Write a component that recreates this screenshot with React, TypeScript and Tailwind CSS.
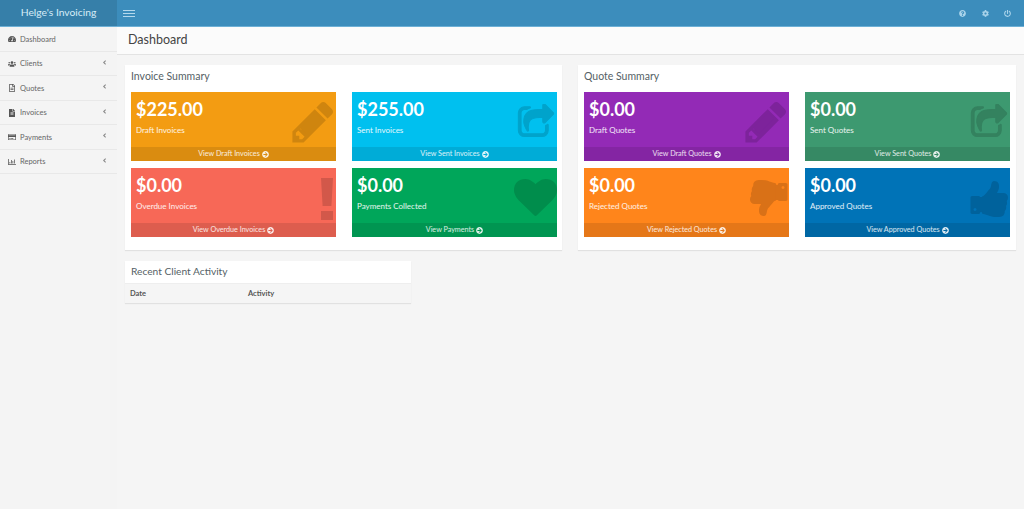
import React from 'react';
import {
  FaTachometerAlt, FaUsers, FaRegFileAlt, FaFileAlt, FaRegCreditCard, FaRegChartBar, FaAngleLeft,
  FaQuestionCircle, FaCog, FaPowerOff, FaArrowCircleRight,
} from 'react-icons/fa';

const thumbPath = 'M320 1344q0-26-19-45t-45-19q-27 0-45.5 19t-18.5 45q0 27 18.5 45.5t45.5 18.5q26 0 45-18.5t19-45.5zm160-512v640q0 26-19 45t-45 19h-288q-26 0-45-19t-19-45v-640q0-26 19-45t45-19h288q26 0 45 19t19 45zm1184 0q0 86-55 149 15 44 15 76 3 76-43 137 17 56 0 117-15 57-54 94 9 112-49 181-64 76-197 78h-129q-66 0-144-15.5t-121.5-29-120.5-39.5q-123-43-158-44-26-1-45-19.5t-19-44.5v-641q0-25 18-43.5t43-20.5q24-2 76-59t101-121q68-87 101-120 18-18 31-48t17.5-48.5 13.5-60.5q7-39 12.5-61t19.5-52 34-50q19-19 45-19 46 0 82.5 10.5t60 26 40 40.5 24 45 12 50 5 45 .5 39q0 38-9.5 76t-19 60-27.5 56q-3 6-10 18t-11 22-8 24h277q78 0 135 57t57 135z';

const PencilMark = ({ className }: { className: string }) => (
  <svg viewBox="0 0 1792 1792" fill="currentColor" className={`absolute right-[-1px] top-[6px] h-[48px] w-[48px] ${className}`}>
    <path d="M491 1536l91-91-235-235-91 91v107h128v128h107zm523-928q0-22-22-22-10 0-17 7l-542 542q-7 7-7 17 0 22 22 22 10 0 17-7l542-542q7-7 7-17zm-54-192l416 416-832 832h-416v-416zm683 96q0 53-37 90l-166 166-416-416 166-165q36-38 90-38 53 0 91 38l235 234q37 39 37 91z" />
    <path d="M420 1120l560-560 210 210-560 560z" />
  </svg>
);

const ShareMark = ({ className }: { className: string }) => (
  <svg viewBox="0 0 1792 1792" fill="currentColor" stroke="currentColor" strokeWidth="50" className={`absolute right-[2px] top-[12px] h-[38px] w-[38px] ${className}`}>
    <path d="M1472 989v259q0 119-84.5 203.5t-203.5 84.5h-832q-119 0-203.5-84.5t-84.5-203.5v-832q0-119 84.5-203.5t203.5-84.5h255q13 0 22.5 9.5t9.5 22.5q0 27-26 32-77 26-133 60-10 4-16 4h-112q-66 0-113 47t-47 113v832q0 66 47 113t113 47h832q66 0 113-47t47-113v-214q0-19 18-29 28-13 54-37 16-16 35-8 21 9 21 29zm237-496l-384 384q-18 19-45 19-12 0-25-5-39-17-39-59v-192h-160q-323 0-438 131-119 137-74 473 3 23-20 34-8 2-12 2-16 0-26-13-10-14-21-31t-39.5-68.5-49.5-99.5-38.5-114-17.5-122q0-49 3.5-91t14-90 28-88 47-81.5 68.5-74 94.5-61.5 124.5-48.5 159.5-30.5 196.5-11h160v-192q0-42 39-59 13-5 25-5 26 0 45 19l384 384q19 19 19 45t-19 45z" />
  </svg>
);

const BangMark = ({ className }: { className: string }) => (
  <svg viewBox="0 0 12 42" fill="currentColor" className={`absolute right-[3px] top-[10px] h-[42px] w-[12px] ${className}`}>
    <path d="M0 0h12l-1.6 28h-8.8z" />
    <path d="M0 33h12v9h-12z" />
  </svg>
);

const HeartMark = ({ className }: { className: string }) => (
  <svg viewBox="0 0 1792 1792" fill="currentColor" className={`absolute right-[0px] top-[8px] h-[43px] w-[43px] ${className}`}>
    <path d="M896 1664q-26 0-44-18l-624-602q-10-8-27.5-26t-55.5-65.5-68-97.5-53.5-121-23.5-138q0-220 127-344t351-124q62 0 126.5 21.5t120 58 95.5 68.5 76 68q36-36 76-68t95.5-68.5 120-58 126.5-21.5q224 0 351 124t127 344q0 221-229 450l-623 600q-18 18-44 18z" />
  </svg>
);

const ThumbUpMark = ({ className }: { className: string }) => (
  <svg viewBox="0 0 1792 1792" fill="currentColor" className={`absolute right-[-1px] top-[10px] h-[42px] w-[42px] ${className}`}>
    <path d={thumbPath} />
    <path d="M470 810h120v640h-120z" />
  </svg>
);

const ThumbDownMark = ({ className }: { className: string }) => (
  <svg viewBox="0 0 1792 1792" fill="currentColor" className={`absolute right-[0px] top-[9px] h-[42px] w-[42px] rotate-180 ${className}`}>
    <path d={thumbPath} />
    <path d="M470 810h120v640h-120z" />
  </svg>
);

const nav = [
  { label: 'Dashboard', icon: FaTachometerAlt, sub: false },
  { label: 'Clients', icon: FaUsers, sub: true },
  { label: 'Quotes', icon: FaRegFileAlt, sub: true },
  { label: 'Invoices', icon: FaFileAlt, sub: true },
  { label: 'Payments', icon: FaRegCreditCard, sub: true },
  { label: 'Reports', icon: FaRegChartBar, sub: true },
];

const invoiceCards = [
  { amount: '$225.00', label: 'Draft Invoices', link: 'View Draft Invoices', bg: 'bg-[#f39c12]', foot: 'bg-[#da8c10]', mark: 'text-[#cf850f]', icon: PencilMark },
  { amount: '$255.00', label: 'Sent Invoices', link: 'View Sent Invoices', bg: 'bg-[#00c0ef]', foot: 'bg-[#00acd7]', mark: 'text-[#00a3cb]', icon: ShareMark },
  { amount: '$0.00', label: 'Overdue Invoices', link: 'View Overdue Invoices', bg: 'bg-[#f76857]', foot: 'bg-[#dd5d4e]', mark: 'text-[#d2584a]', icon: BangMark },
  { amount: '$0.00', label: 'Payments Collected', link: 'View Payments', bg: 'bg-[#00a65a]', foot: 'bg-[#009551]', mark: 'text-[#008d4c]', icon: HeartMark },
];

const quoteCards = [
  { amount: '$0.00', label: 'Draft Quotes', link: 'View Draft Quotes', bg: 'bg-[#932ab6]', foot: 'bg-[#8425a3]', mark: 'text-[#7d239b]', icon: PencilMark },
  { amount: '$0.00', label: 'Sent Quotes', link: 'View Sent Quotes', bg: 'bg-[#3d9970]', foot: 'bg-[#368964]', mark: 'text-[#34825f]', icon: ShareMark },
  { amount: '$0.00', label: 'Rejected Quotes', link: 'View Rejected Quotes', bg: 'bg-[#ff851b]', foot: 'bg-[#e57718]', mark: 'text-[#d97117]', icon: ThumbDownMark },
  { amount: '$0.00', label: 'Approved Quotes', link: 'View Approved Quotes', bg: 'bg-[#0073b7]', foot: 'bg-[#0067a4]', mark: 'text-[#00629c]', icon: ThumbUpMark },
];

type CardData = (typeof invoiceCards)[number];

const StatCard: React.FC<{ card: CardData }> = ({ card }) => {
  const Icon = card.icon;
  return (
    <div className={`relative h-[69px] overflow-hidden text-white ${card.bg}`}>
      <Icon className={card.mark} />
      <div className="relative h-[55px] pl-[5px] pt-[5px]">
        <div className="text-[18px] leading-[24px] font-bold">{card.amount}</div>
        <div className="mt-[3px] text-[8px] leading-[12px] text-white/90">{card.label}</div>
      </div>
      <div className={`relative flex h-[14px] items-center justify-center gap-[2px] text-[7.2px] text-white/85 ${card.foot}`}>
        {card.link} <FaArrowCircleRight size={7} />
      </div>
    </div>
  );
};

const SummaryBox: React.FC<{ title: string; cards: CardData[] }> = ({ title, cards }) => (
  <div className="h-[185px] bg-white px-[6px] shadow-[0_1px_1px_rgba(0,0,0,0.08)]">
    <div className="flex h-[23px] items-center text-[10.5px] text-[#555f66]">{title}</div>
    <div className="mt-[4px] grid grid-cols-[205px_205px] gap-x-4 gap-y-[7px]">
      {cards.map(card => <StatCard key={card.label} card={card} />)}
    </div>
  </div>
);

export default function App() {
  return (
    <div className="flex h-[509px] w-[1024px] flex-col overflow-hidden bg-[#f5f5f5] font-['Lato',sans-serif]">
      <header className="flex h-[27px] shrink-0 border-b border-[#6db0d6] bg-[#3c8dbc]">
        <div className="flex w-[117px] items-center justify-center bg-[#367fa9] text-[10.3px] text-[#d6edf8]">
          Helge's Invoicing
        </div>
        <div className="flex flex-1 items-center justify-between pl-[6px] pr-[13px] text-[#a9d3ea]">
          <div className="flex w-[12px] flex-col gap-[2px]">
            <span className="h-px bg-[#b5d8ec]" />
            <span className="h-px bg-[#b5d8ec]" />
            <span className="h-px bg-[#b5d8ec]" />
          </div>
          <div className="flex items-center gap-[15.5px]">
            <FaQuestionCircle size={7} />
            <FaCog size={7} />
            <FaPowerOff size={7} />
          </div>
        </div>
      </header>

      <div className="flex flex-1">
        <aside className="w-[117px] shrink-0 bg-[#f4f4f4]">
          {nav.map(item => {
            const Icon = item.icon;
            return (
              <div key={item.label} className="flex h-[24.5px] items-center border-b border-[#e8e8e8] pl-[8px] pr-[9px] pt-[1px] text-[7.5px] text-[#666]">
                <Icon size={8} className="w-[8px] text-[#555]" />
                <span className="ml-[4px] flex-1">{item.label}</span>
                {item.sub && <FaAngleLeft size={7} className="-mt-[3px] text-[#888]" />}
              </div>
            );
          })}
        </aside>

        <div className="flex-1">
          <div className="flex h-[28px] items-center border-b border-[#e3e3e3] bg-[#fbfbfb] pl-[11px] text-[12.5px] text-[#444]">
            Dashboard
          </div>
          <main className="px-[8px] pt-[10px]">
            <div className="grid grid-cols-[437px_1fr] gap-4">
              <SummaryBox title="Invoice Summary" cards={invoiceCards} />
              <SummaryBox title="Quote Summary" cards={quoteCards} />
            </div>
            <div className="mt-[11px] w-[286px] bg-white shadow-[0_1px_1px_rgba(0,0,0,0.08)]">
              <div className="flex h-[22px] items-center pl-[6px] text-[10.2px] text-[#555f66]">Recent Client Activity</div>
              <div className="grid h-[20px] grid-cols-[118px_1fr] items-center border-t border-[#eee] bg-[#f5f5f5] pl-[5px] text-[7.5px] font-bold text-[#555]">
                <span>Date</span>
                <span>Activity</span>
              </div>
            </div>
          </main>
        </div>
      </div>
    </div>
  );
}
